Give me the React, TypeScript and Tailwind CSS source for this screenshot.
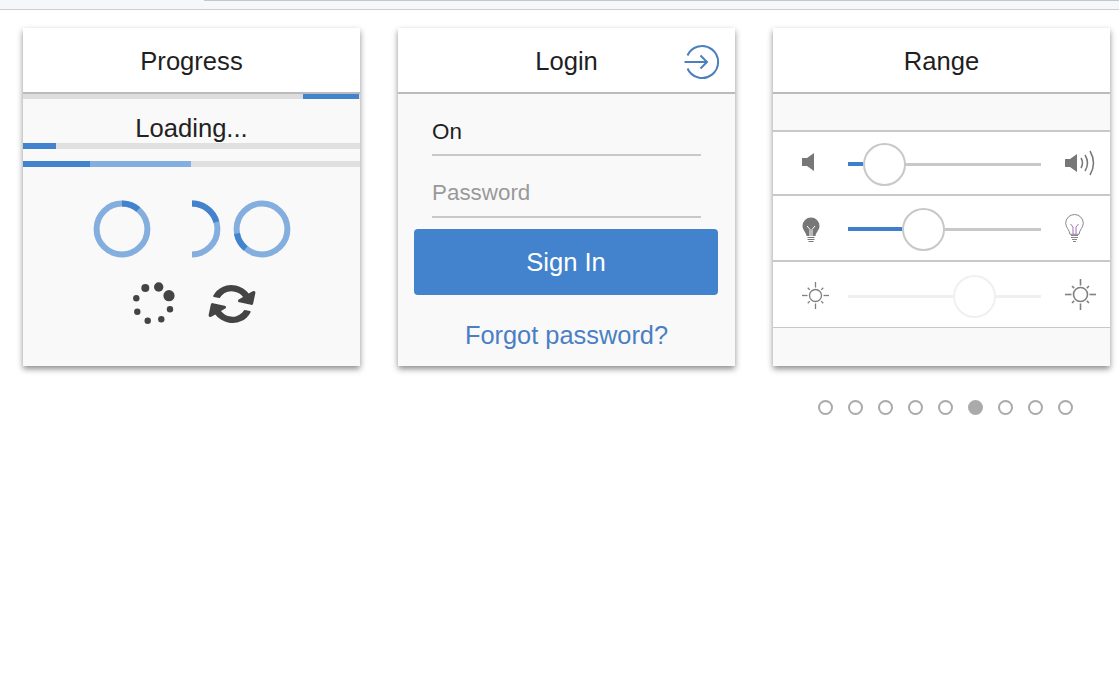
const font = { fontFamily: '"Liberation Sans", Arial, sans-serif' };

function polar(cx: number, cy: number, r: number, deg: number) {
  const a = ((deg - 90) * Math.PI) / 180;
  return [cx + r * Math.cos(a), cy + r * Math.sin(a)];
}
function arc(from: number, to: number) {
  const [x1, y1] = polar(29, 29, 25.4, from);
  const [x2, y2] = polar(29, 29, 25.4, to);
  const large = to - from > 180 ? 1 : 0;
  return `M${x1} ${y1}A25.4 25.4 0 ${large} 1 ${x2} ${y2}`;
}

function Ring({ from, to, half }: { from: number; to: number; half?: boolean }) {
  return (
    <svg width="58" height="58" viewBox="0 0 58 58" fill="none" strokeWidth="6">
      {half ? (
        <path d={arc(0, 180)} stroke="#84aedd" />
      ) : (
        <circle cx="29" cy="29" r="25.4" stroke="#84aedd" />
      )}
      <path d={arc(from, to)} stroke="#4382cc" />
    </svg>
  );
}

function Spinner() {
  const dots = [
    [145.3, 288, 4],
    [158.7, 287, 4.7],
    [169, 295.7, 5.6],
    [170, 309.3, 3.2],
    [161.3, 319.3, 3.2],
    [147.7, 320.7, 3.2],
    [137.3, 311.7, 3.2],
    [136.3, 298.3, 3.2],
  ];
  return (
    <svg width="46" height="44" viewBox="130 282 46 44" fill="#444">
      {dots.map(([x, y, r]) => (
        <circle key={x} cx={x} cy={y} r={r} />
      ))}
    </svg>
  );
}

function Refresh() {
  return (
    <svg width="48" height="44" viewBox="0 0 1792 1792" preserveAspectRatio="none" fill="#444" style={{ transform: "rotate(12deg)" }}>
      <path d="M1639 1056q0 5-1 7-64 268-268 434.5t-478 166.5q-146 0-282.500-55t-243.500-157l-129 129q-19 19-45 19t-45-19-19-45v-448q0-26 19-45t45-19h448q26 0 45 19t19 45-19 45l-137 137q71 66 161 102t187 36q134 0 250-65t186-179q11-17 53-117 8-23 30-23h192q13 0 22.500 9.500t9.500 22.500zm25-800v448q0 26-19 45t-45 19h-448q-26 0-45-19t-19-45 19-45l138-138q-148-137-349-137-134 0-250 65t-186 179q-11 17-53 117-8 23-30 23h-199q-13 0-22.500-9.500t-9.500-22.500v-7q65-268 270-434.500t480-166.500q146 0 284 55.500t245 156.500l130-129q19-19 45-19t45 19 19 45z" />
    </svg>
  );
}

function Card({ title, icon, children }: { title: string; icon?: React.ReactNode; children: React.ReactNode }) {
  return (
    <div className="w-[337px] h-[338px] flex flex-col bg-[#f9f9f9] shadow-[0_3px_6px_rgba(0,0,0,0.45)]">
      <div className="relative h-[66px] shrink-0 bg-white border-b-2 border-[#bbbbbb] flex items-center justify-center text-[25.6px] text-[#1f1f1f] pt-[3px]">
        <span>{title}</span>
        {icon}
      </div>
      {children}
    </div>
  );
}

function Track({ value, knob, disabled }: { value: number; knob: number; disabled?: boolean }) {
  return (
    <div className={`relative w-[193px] h-[3px] mt-[3px] ${disabled ? "bg-[#f0f0f0]" : "bg-[#c8c8c8]"}`}>
      {value > 0 && <div className="absolute left-0 -top-[1px] h-[4px] bg-[#3d7fcb]" style={{ width: value }} />}
      <div
        className={`absolute -top-[20px] w-[43px] h-[43px] rounded-full bg-white border-2 ${disabled ? "border-[#f0f0f0]" : "border-[#c8c8c8]"}`}
        style={{ left: knob - 22 }}
      />
    </div>
  );
}

const SpeakerLow = () => (
  <svg className="-mt-[2px]" width="14" height="18" viewBox="0 0 14 18" fill="#777"><path d="M0 5h5l7-5v18l-7-5H0z" /></svg>
);
const SpeakerHigh = () => (
  <svg width="31" height="26" viewBox="0 0 31 26" fill="none">
    <path d="M0 9h5l7-5v18l-7-5H0z" fill="#777" />
    <path d="M16 8q3 5 0 10" stroke="#777" strokeWidth="1.5" />
    <path d="M20 5q5 8 0 16" stroke="#777" strokeWidth="1.5" />
    <path d="M25 1q7 12 0 24" stroke="#777" strokeWidth="1.5" />
  </svg>
);
const BulbDark = () => (
  <svg className="mt-[4px]" width="18" height="27" viewBox="0 0 18 27" fill="none">
    <path d="M9 0.500a8.500 8.500 0 0 0-8.500 8.500c0 4 3.500 6 4 10h9c.5-4 4-6 4-10A8.500 8.500 0 0 0 9 0.500z" fill="#777" />
    <path d="M5 9l3 3.500v6.500M13 9l-3 3.500v6.500" stroke="#fff" strokeWidth="1" />
    <path d="M5.500 20.500h7M5.500 22.500h7M6.500 24.500h5" stroke="#777" strokeWidth="1.200" />
  </svg>
);
const BulbLight = () => (
  <svg width="19" height="29" viewBox="0 0 19 29" fill="none" stroke="#888" strokeWidth="1">
    <path d="M9.500 0.500a8.800 8.800 0 0 0-8.800 8.800c0 4 3.800 6.500 4.300 11h9c.5-4.500 4.300-7 4.300-11A8.800 8.800 0 0 0 9.500 0.500z" />
    <path d="M5.500 10l2.500 3v7M13.500 10l-2.500 3v7" stroke="#a070c0" />
    <path d="M6 21.500h7M6 23.500h7M7 25.500h5M8 27.500h3" strokeWidth="1.200" />
  </svg>
);
const Sun = ({ size, r, w }: { size: number; r: number; w: number }) => {
  const c = size / 2;
  const spokes = [0, 45, 90, 135, 180, 225, 270, 315];
  return (
    <svg width={size} height={size} viewBox={`0 0 ${size} ${size}`} fill="none" stroke="#808080" strokeWidth={w}>
      <circle cx={c} cy={c} r={r} />
      {spokes.map((d) => {
        const [x1, y1] = polar(c, c, r + 2, d);
        const [x2, y2] = polar(c, c, d % 90 ? r + 5 : c, d);
        return <path key={d} d={`M${x1} ${y1}L${x2} ${y2}`} />;
      })}
    </svg>
  );
};

function RangeRow({ left, right, value, knob, disabled, h, border }: { left: React.ReactNode; right: React.ReactNode; value: number; knob: number; disabled?: boolean; h: string; border: string }) {
  return (
    <div className={`${h} ${border} flex items-center bg-white border-[#c8c8c8]`}>
      <div className="w-[75px] pl-[29px] shrink-0 flex items-center">{left}</div>
      <Track value={value} knob={knob} disabled={disabled} />
      <div className="pl-[24px] flex items-center">{right}</div>
    </div>
  );
}

export default function App() {
  return (
    <div style={font} className="min-h-[685px] bg-white">
      <div className="relative h-[10px] bg-[#f6f7f9] border-b border-[#cfcfd2]">
        <div className="absolute left-[204px] right-0 top-0 h-px bg-[#c4c7cb]" />
      </div>
      <div className="flex gap-[38px] pl-[23px] pt-[18px]">
        <Card title="Progress">
          <div className="h-[5px] bg-[#dddddd] flex justify-end pr-px">
            <div className="w-[56px] bg-[#4382cc]" />
          </div>
          <div className="h-[44px] flex items-center justify-center text-[25.6px] text-[#222] pt-[15px]">Loading...</div>
          <div className="h-[6px] bg-[#e0e0e0]">
            <div className="w-[33px] h-full bg-[#4382cc]" />
          </div>
          <div className="h-[6px] bg-[#e0e0e0] mt-[12px] flex">
            <div className="w-[67px] bg-[#4382cc]" />
            <div className="w-[101px] bg-[#84aedd]" />
          </div>
          <div className="flex justify-center gap-[12px] mt-[33px] h-[58px]">
            <Ring from={0} to={40} />
            <Ring from={0} to={74} half />
            <Ring from={220} to={260} />
          </div>
          <div className="flex justify-center items-center gap-[32px] mt-[24px] h-[44px] ml-[2px]">
            <Spinner />
            <Refresh />
          </div>
        </Card>

        <Card
          title="Login"
          icon={
            <svg className="absolute left-[286px] top-[16px]" width="36" height="36" viewBox="0 0 36 36" fill="none" stroke="#4a80c0" strokeWidth="2">
              <path d="M3.500 11.500A16 16 0 1 1 3.500 24.500" />
              <path d="M0.500 18H23M16.500 11.500L23 18L16.500 24.500" />
            </svg>
          }
        >
          <div className="px-[34px]">
            <div className="h-[62px] flex flex-col justify-end">
              <div className="h-[48px] flex items-center text-[22.4px] text-[#1f1f1f] border-b-2 border-[#c8c8c8] pt-[2px]">On</div>
            </div>
            <div className="h-[62px] flex items-center text-[22.4px] text-[#999] border-b-2 border-[#c8c8c8] pt-[24px] pb-[10px]">Password</div>
          </div>
          <div className="ml-[16px] w-[304px] mt-[11px] h-[66px] rounded bg-[#4382cc] text-white text-[25.6px] flex items-center justify-center">Sign In</div>
          <div className="mt-[22px] text-center text-[25.4px] leading-[36px] text-[#4a7fc4]">Forgot password?</div>
        </Card>

        <Card title="Range">
          <div className="h-[38px] border-b-2 border-[#c8c8c8]" />
          <RangeRow h="h-[64px]" border="border-b-2" left={<SpeakerLow />} right={<SpeakerHigh />} value={15} knob={37} />
          <RangeRow h="h-[66px]" border="border-b-2" left={<BulbDark />} right={<BulbLight />} value={54} knob={76} />
          <RangeRow h="h-[66px]" border="border-b" left={<div className="mt-[2px]"><Sun size={27} r={6} w={1.3} /></div>} right={<Sun size={31} r={7} w={1.6} />} value={0} knob={127} disabled />
        </Card>
      </div>
      <div className="flex gap-[15px] mt-[34px] ml-[818px]">
        {[0, 1, 2, 3, 4, 5, 6, 7, 8].map((i) => (
          <div key={i} className={`w-[15px] h-[15px] rounded-full border-2 border-[#aaaaaa] ${i === 5 ? "bg-[#aaaaaa]" : ""}`} />
        ))}
      </div>
    </div>
  );
}
